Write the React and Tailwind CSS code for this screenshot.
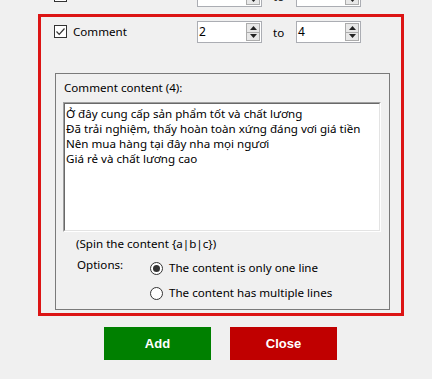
import React from "react";

function Spin({ value }) {
  return (
    <div className="flex h-[22px] w-[65px] items-stretch border border-[#abadb3] bg-white">
      <div className="flex-1 pl-[1px] text-[12px] leading-[20px]">{value}</div>
      <div className="my-[1px] mr-[1px] flex w-[14px] flex-col gap-[0px]">
        <div className="flex flex-1 items-center justify-center border border-[#acacac] bg-[#e8e8e8]">
          <svg width="7" height="4" viewBox="0 0 7 4"><path d="M0 4 L3.5 0 L7 4 Z" fill="#222" /></svg>
        </div>
        <div className="flex flex-1 items-center justify-center border border-t-0 border-[#acacac] bg-[#e8e8e8]">
          <svg width="7" height="4" viewBox="0 0 7 4"><path d="M0 0 L3.5 4 L7 0 Z" fill="#222" /></svg>
        </div>
      </div>
    </div>
  );
}

function Check({ checked }) {
  return (
    <div className="flex h-[13px] w-[13px] items-center justify-center border border-[#333333] bg-white">
      {checked && (
        <svg width="11" height="11" viewBox="0 0 11 11">
          <path d="M1.5 5.5 L4.2 8.3 L9.5 2.5" fill="none" stroke="#333" strokeWidth="1.2" />
        </svg>
      )}
    </div>
  );
}

function Radio({ checked }) {
  return (
    <div className="flex h-[13px] w-[13px] items-center justify-center rounded-full border border-[#333333] bg-white">
      {checked && <div className="h-[7px] w-[7px] rounded-full bg-[#333333]" />}
    </div>
  );
}

function Row({ label, checked, a, b }) {
  return (
    <div className="flex h-[22px] items-center">
      <div className="flex w-[143px] items-center gap-[6px] pb-[1px]">
        <Check checked={checked} />
        <span className="text-[11.6px] leading-[16px]">{label}</span>
      </div>
      <Spin value={a} />
      <div className="w-[34px] pl-[11px] pt-[2px] text-[11.6px] leading-[16px]">to</div>
      <Spin value={b} />
    </div>
  );
}

export default function App() {
  return (
    <div
      className="h-[379px] w-[432px] overflow-hidden bg-[#f0f0f0] text-black"
      style={{ fontFamily: '"Noto Sans", "Open Sans", sans-serif' }}
    >
      <div className="-mt-[15px] pl-[54px]">
        <Row label="Share to Feed" checked={false} a="" b="5" />
      </div>
      <div className="ml-[38px] mt-[7px] h-[302px] w-[366px] border-[3px] border-[#dc1414]">
        <div className="mt-[4px] pl-[13px]">
          <Row label="Comment" checked={true} a="2" b="4" />
        </div>
        <div className="ml-[14px] mt-[30px] h-[237px] w-[335px] border border-[#7a7a7a]">
          <div className="pl-[8px] pt-[6px] text-[11.6px] leading-[16px]">Comment content (4):</div>
          <div className="ml-[7px] mt-[6px] h-[130px] w-[318px] border border-b-white border-l-[#a0a0a0] border-r-white border-t-[#a0a0a0]">
            <div className="h-full w-full border border-b-[#e3e3e3] border-l-[#696969] border-r-[#e3e3e3] border-t-[#696969] bg-white pl-[1px] pt-[2px] text-[11.6px] leading-[15px]">
              <div>Ở đây cung cấp sản phẩm tốt và chất lương</div>
              <div>Đã trải nghiệm, thấy hoàn toàn xứng đáng vơi giá tiền</div>
              <div>Nên mua hàng tại đây nha mọi ngươi</div>
              <div>Giá rẻ và chất lương cao</div>
            </div>
          </div>
          <div className="pl-[20px] pt-[4px] text-[11.6px] leading-[16px]">(Spin the content {"{a|b|c}"})</div>
          <div className="mt-[4px] flex pl-[21px]">
            <div className="w-[73px] pt-[1px] text-[11.6px] leading-[16px]">Options:</div>
            <div className="flex flex-col gap-[9px] pt-[4px]">
              <div className="flex items-center gap-[6px]">
                <Radio checked={true} />
                <span className="text-[11.6px] leading-[16px]">The content is only one line</span>
              </div>
              <div className="flex items-center gap-[6px]">
                <Radio checked={false} />
                <span className="text-[11.6px] leading-[16px]">The content has multiple lines</span>
              </div>
            </div>
          </div>
        </div>
      </div>
      <div
        className="mt-[11px] flex gap-[19px] pl-[104px]"
        style={{ fontFamily: '"Liberation Sans", Arial, sans-serif' }}
      >
        <div className="flex h-[33px] w-[107px] items-center justify-center bg-[#008000] text-[13px] font-bold text-white">
          Add
        </div>
        <div className="flex h-[33px] w-[107px] items-center justify-center bg-[#c00000] text-[13px] font-bold text-white">
          Close
        </div>
      </div>
    </div>
  );
}
